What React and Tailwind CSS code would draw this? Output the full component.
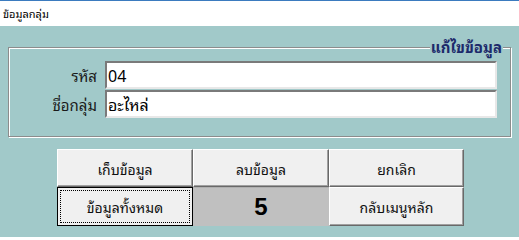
import React from "react";

const FONT = { fontFamily: 'Tahoma, "Noto Sans Thai Looped", "Noto Sans Thai UI", "Noto Sans Thai", "Liberation Sans", sans-serif' };

function Field({ label, value }) {
  return (
    <div className="flex items-center h-[28px]">
      <span className="w-[88px] text-right pr-[8px] text-[15px] text-[#1a1a1a]">{label}</span>
      <div className="w-[392px] h-full bg-white border-2 border-t-[#7a7a7a] border-l-[#7a7a7a] border-b-[#e8e8e8] border-r-[#e8e8e8] flex items-center pl-[1px] text-[16px] text-black">
        {value}
      </div>
    </div>
  );
}

function Btn({ children, focused }) {
  if (focused) {
    return (
      <div className="h-full bg-[#f0f0f0] border border-black p-[2px]">
        <div className="h-full border border-dotted border-black flex items-center justify-center text-[14px] text-[#111]">
          {children}
        </div>
      </div>
    );
  }
  return (
    <div className="h-full bg-[#f0f0f0] border border-t-white border-l-white border-b-[#696969] border-r-[#696969] shadow-[inset_-1px_-1px_0_#a0a0a0] flex items-center justify-center text-[14px] text-[#111]">
      {children}
    </div>
  );
}

export default function App() {
  return (
    <div className="w-[519px] h-[237px] bg-[#a1c9c9] overflow-hidden" style={FONT}>
      {/* title bar */}
      <div className="h-[26px] bg-white border-t border-[#3b7bbf] flex items-center pl-[3px] text-[11px] text-black">
        ข้อมูลกลุ่ม
      </div>

      {/* group box */}
      <div className="relative mt-[21px] ml-[8px] w-[503px] h-[90px] border border-[#8c8c8c] shadow-[inset_1px_1px_0_#fff,1px_1px_0_#fff] pt-[13px] pl-[8px]">
        <span className="absolute right-[7px] -top-[12px] px-[1px] bg-[#a1c9c9] text-[15px] font-bold text-[#1c2a6b] leading-[20px]">
          แก้ไขข้อมูล
        </span>
        <div className="flex flex-col gap-[1px]">
          <Field label="รหัส" value="04" />
          <Field label="ชื่อกลุ่ม" value="อะไหล่" />
        </div>
      </div>

      {/* buttons */}
      <div className="mt-[12px] ml-[57px] w-[407px] grid grid-cols-[136px_136px_135px] grid-rows-[38px_39px]">
        <Btn>เก็บข้อมูล</Btn>
        <Btn>ลบข้อมูล</Btn>
        <Btn>ยกเลิก</Btn>
        <Btn focused>ข้อมูลทั้งหมด</Btn>
        <div className="h-full bg-[#c0c0c0] border-t border-[#b0b0b0] flex items-center justify-center text-[24px] font-bold text-black" style={{ fontFamily: '"Liberation Sans", Arial, sans-serif' }}>
          5
        </div>
        <Btn>กลับเมนูหลัก</Btn>
      </div>
    </div>
  );
}
